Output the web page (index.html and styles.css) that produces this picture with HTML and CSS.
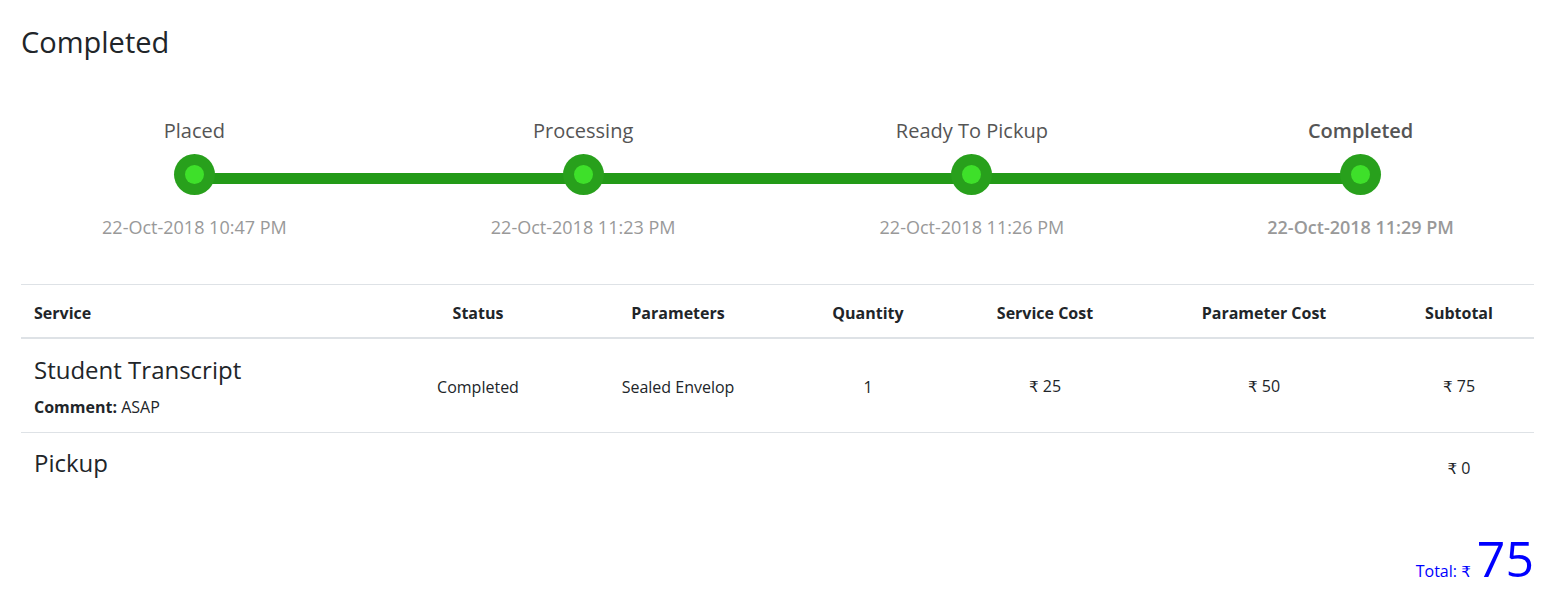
FILE: index.html
```html
<!DOCTYPE html>
<html lang="en">
<head>
<meta charset="utf-8">
<title>Order</title>
<link rel="stylesheet" href="styles.css">
</head>
<body>
<div class="page">
  <h3 class="title">Completed</h3>

  <div class="timeline">
    <div class="step">
      <div class="step-label">Placed</div>
      <div class="node"><span class="dot"></span></div>
      <div class="step-date">22-Oct-2018 10:47 PM</div>
    </div>
    <div class="step">
      <div class="step-label">Processing</div>
      <div class="node"><span class="dot"></span></div>
      <div class="step-date">22-Oct-2018 11:23 PM</div>
    </div>
    <div class="step">
      <div class="step-label">Ready To Pickup</div>
      <div class="node"><span class="dot"></span></div>
      <div class="step-date">22-Oct-2018 11:26 PM</div>
    </div>
    <div class="step step-current">
      <div class="step-label">Completed</div>
      <div class="node"><span class="dot"></span></div>
      <div class="step-date">22-Oct-2018 11:29 PM</div>
    </div>
  </div>

  <div class="content">
    <table class="items">
      <colgroup>
        <col class="c-service">
        <col class="c-status">
        <col class="c-params">
        <col class="c-qty">
        <col class="c-scost">
        <col class="c-pcost">
        <col class="c-sub">
      </colgroup>
      <thead>
        <tr>
          <th class="left">Service</th>
          <th>Status</th>
          <th>Parameters</th>
          <th>Quantity</th>
          <th>Service Cost</th>
          <th>Parameter Cost</th>
          <th>Subtotal</th>
        </tr>
      </thead>
      <tbody>
        <tr class="row-main">
          <td class="left">
            <div class="svc-name">Student Transcript</div>
            <div class="svc-comment"><b>Comment:</b> ASAP</div>
          </td>
          <td>Completed</td>
          <td>Sealed Envelop</td>
          <td>1</td>
          <td><span class="rupee">₹</span> 25</td>
          <td><span class="rupee">₹</span> 50</td>
          <td><span class="rupee">₹</span> 75</td>
        </tr>
        <tr class="row-pickup">
          <td class="left"><div class="svc-name">Pickup</div></td>
          <td></td>
          <td></td>
          <td></td>
          <td></td>
          <td></td>
          <td class="pickup-cost"><span class="rupee">₹</span> 0</td>
        </tr>
      </tbody>
    </table>

    <div class="total">
      <span class="total-label">Total: <span class="rupee">₹</span></span>
      <span class="total-value">75</span>
    </div>
  </div>
</div>
</body>
</html>
```

FILE: styles.css
```css
* { box-sizing: border-box; }

html, body {
  margin: 0;
  padding: 0;
  background: #fff;
}

body {
  font-family: "Open Sans", "Noto Sans", "Liberation Sans", sans-serif;
  color: #212529;
  font-size: 16px;
}

.page {
  width: 1562px;
  height: 593px;
  overflow: hidden;
}

.rupee {
  font-family: "DejaVu Sans", "Noto Sans", sans-serif;
  font-size: 0.95em;
}

.title {
  margin: 0;
  padding: 22px 0 0 21px;
  font-size: 29px;
  font-weight: 400;
  line-height: 40px;
  color: #212529;
}

/* ---------- timeline ---------- */
.timeline {
  display: grid;
  grid-template-columns: repeat(4, 1fr);
  width: 1555px;
  margin-top: 55px;
}

.step {
  display: flex;
  flex-direction: column;
  align-items: center;
}

.step-label {
  font-size: 20px;
  line-height: 28px;
  color: #555;
  height: 28px;
}

.node {
  position: relative;
  width: 100%;
  height: 41px;
  margin-top: 9px;
  display: flex;
  justify-content: center;
}

.step:not(:last-child) .node::before {
  content: "";
  position: absolute;
  left: 50%;
  width: 100%;
  top: 19px;
  height: 11px;
  background: #239a18;
}

.dot {
  position: relative;
  width: 41px;
  height: 41px;
  border-radius: 50%;
  background: #28a01c;
  display: flex;
  align-items: center;
  justify-content: center;
}

.dot::after {
  content: "";
  width: 19px;
  height: 19px;
  border-radius: 50%;
  background: #3ee02a;
}

.step-date {
  margin-top: 20px;
  font-size: 18px;
  line-height: 24px;
  color: #999;
}

.step-current .step-label { font-weight: 600; }
.step-current .step-date { font-weight: 600; }

/* ---------- table ---------- */
.content {
  padding: 0 28px 0 21px;
}

.items {
  width: 100%;
  margin-top: 45px;
  border-collapse: collapse;
  table-layout: fixed;
}

.c-service { width: 369px; }
.c-status  { width: 176px; }
.c-params  { width: 224px; }
.c-qty     { width: 156px; }
.c-scost   { width: 198px; }
.c-pcost   { width: 240px; }
.c-sub     { width: 150px; }

.items th,
.items td {
  text-align: center;
  vertical-align: middle;
  font-size: 16px;
  line-height: 24px;
  color: #212529;
}

.items .left { text-align: left; padding-left: 13px; }

.items thead th {
  font-weight: 700;
  padding: 16px 12px 12px;
  border-top: 1px solid #dee2e6;
  border-bottom: 2px solid #dee2e6;
}

.row-main td {
  padding: 15px 12px 13px;
  border-bottom: 1px solid #dee2e6;
}

.row-main td.left { padding-left: 13px; }

.svc-name {
  font-size: 24px;
  line-height: 32px;
}

.svc-comment {
  font-size: 16px;
  line-height: 24px;
  margin-top: 9px;
}

.svc-comment b { font-weight: 700; }

.row-pickup td {
  height: 62px;
  vertical-align: top;
  padding: 14px 12px 0;
}

.row-pickup td.left { padding-left: 13px; }

.row-pickup td.pickup-cost {
  padding-top: 23px;
}

.total {
  display: flex;
  justify-content: flex-end;
  align-items: baseline;
  gap: 6px;
  margin-top: 35px;
  color: #0000ff;
}

.total-label {
  font-size: 16px;
}

.total-value {
  font-size: 50px;
  line-height: 56px;
}
```
